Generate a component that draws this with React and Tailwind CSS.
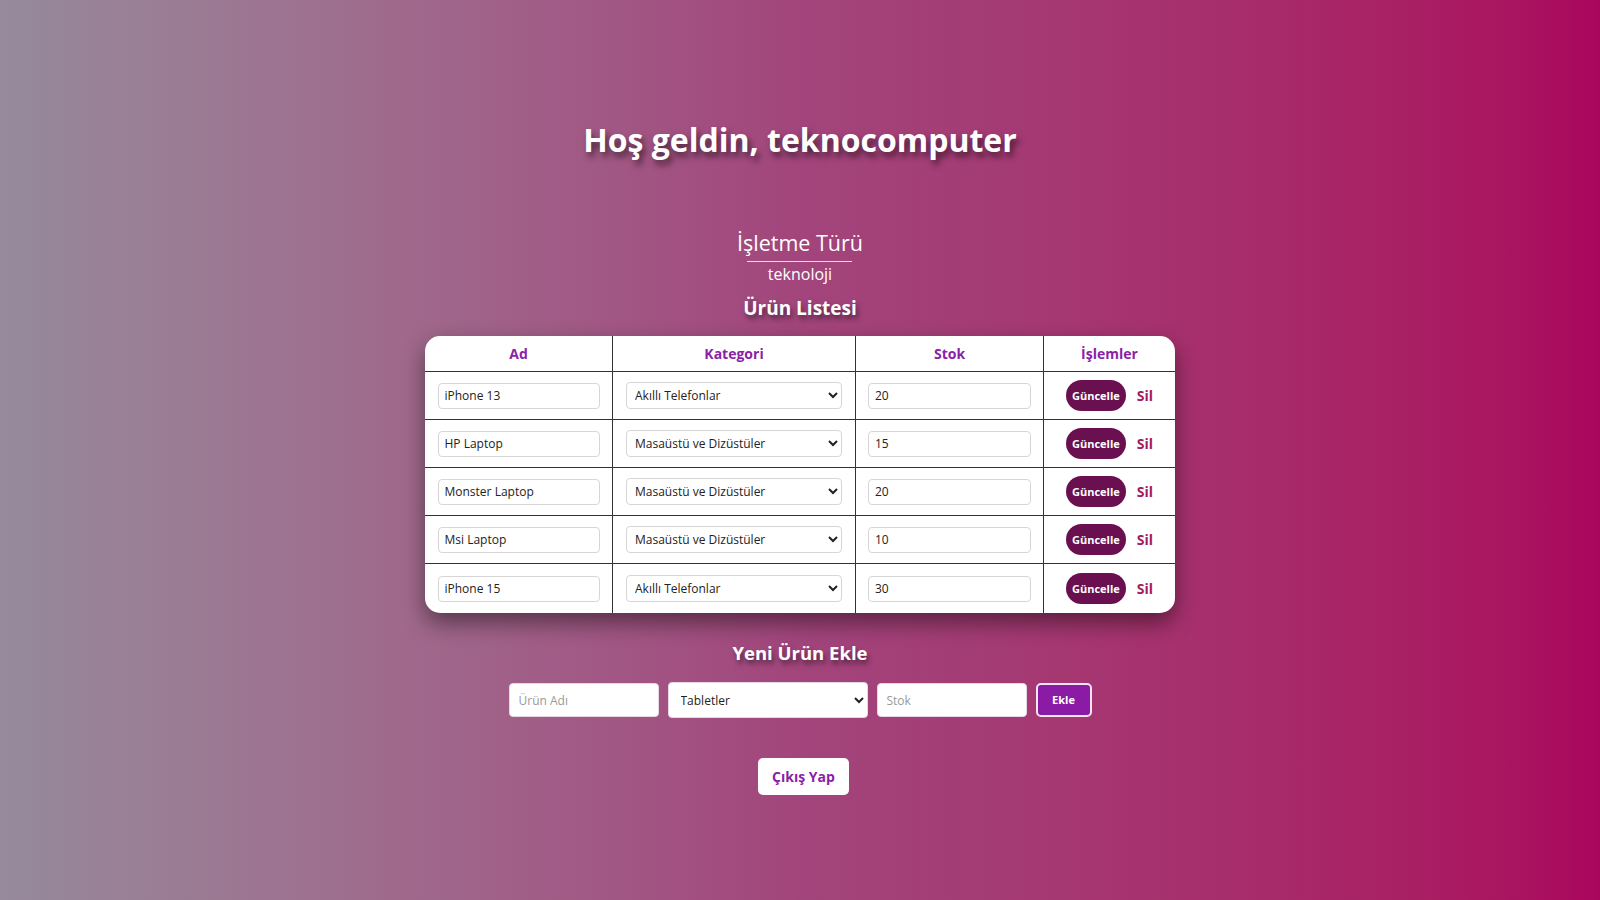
import { useState } from 'react'

const CATEGORIES = ['Akıllı Telefonlar', 'Masaüstü ve Dizüstüler', 'Tabletler', 'Aksesuarlar']

const initialProducts = [
  { id: 1, name: 'iPhone 13', category: 'Akıllı Telefonlar', stock: '20' },
  { id: 2, name: 'HP Laptop', category: 'Masaüstü ve Dizüstüler', stock: '15' },
  { id: 3, name: 'Monster Laptop', category: 'Masaüstü ve Dizüstüler', stock: '20' },
  { id: 4, name: 'Msi Laptop', category: 'Masaüstü ve Dizüstüler', stock: '10' },
  { id: 5, name: 'iPhone 15', category: 'Akıllı Telefonlar', stock: '30' },
]

export default function App() {
  const [products, setProducts] = useState(initialProducts)
  const [newName, setNewName] = useState('')
  const [newCategory, setNewCategory] = useState('Tabletler')
  const [newStock, setNewStock] = useState('')

  function updateField(id, field, value) {
    setProducts((list) => list.map((p) => (p.id === id ? { ...p, [field]: value } : p)))
  }

  function removeProduct(id) {
    setProducts((list) => list.filter((p) => p.id !== id))
  }

  function addProduct() {
    if (!newName.trim()) return
    setProducts((list) => [...list, { id: Date.now(), name: newName, category: newCategory, stock: newStock }])
    setNewName('')
    setNewStock('')
  }

  return (
    <div className="min-h-screen w-full bg-gradient-to-r from-[#968a9c] via-[#a2457c] to-[#aa055d] flex flex-col items-center font-['Open_Sans',sans-serif] text-white">
      {/* Başlık */}
      <h1 className="mt-[117px] text-[32px] leading-[46px] font-bold [text-shadow:3px_5px_6px_rgba(0,0,0,0.55)]">
        Hoş geldin, teknocomputer
      </h1>

      {/* İşletme türü */}
      <div className="mt-[65px] flex flex-col items-center">
        <p className="text-[21.5px] leading-[30px] font-normal">İşletme Türü</p>
        <div className="w-[105px] h-px bg-white/80 mt-[3px]" />
        <p className="text-[16px] leading-[22px] mt-[1px]">teknoloji</p>
      </div>

      <h2 className="mt-[10px] text-[19px] leading-[26px] font-bold [text-shadow:2px_4px_5px_rgba(0,0,0,0.5)]">Ürün Listesi</h2>

      {/* Ürün tablosu */}
      <div className="mt-[15px] w-[750px] bg-white rounded-[15px] overflow-hidden shadow-[0_10px_22px_rgba(0,0,0,0.45)] text-[#222]">
        <div className="grid grid-cols-[188px_243px_188px_131px] h-[36px] border-b border-[#333] text-[14px] font-bold text-[#8a22a8]">
          <div className="flex items-center justify-center border-r border-[#333]">Ad</div>
          <div className="flex items-center justify-center border-r border-[#333]">Kategori</div>
          <div className="flex items-center justify-center border-r border-[#333]">Stok</div>
          <div className="flex items-center justify-center">İşlemler</div>
        </div>
        {products.map((p, i) => (
          <div
            key={p.id}
            className={`grid grid-cols-[188px_243px_188px_131px] ${i < products.length - 1 ? 'h-[48px] border-b border-[#333]' : 'h-[49px]'}`}
          >
            <div className="flex items-center justify-center border-r border-[#333]">
              <input
                value={p.name}
                onChange={(e) => updateField(p.id, 'name', e.target.value)}
                className="w-[162px] h-[26px] border border-[#d6d6d6] rounded-[4px] px-[6px] text-[12px] text-[#222] outline-none"
              />
            </div>
            <div className="flex items-center justify-center border-r border-[#333]">
              <select
                value={p.category}
                onChange={(e) => updateField(p.id, 'category', e.target.value)}
                className="w-[216px] h-[27px] border border-[#d6d6d6] rounded-[4px] px-[4px] text-[12px] text-[#222] bg-white outline-none"
              >
                {CATEGORIES.map((c) => (
                  <option key={c} value={c}>{c}</option>
                ))}
              </select>
            </div>
            <div className="flex items-center justify-center border-r border-[#333]">
              <input
                value={p.stock}
                onChange={(e) => updateField(p.id, 'stock', e.target.value)}
                className="w-[163px] h-[26px] border border-[#d6d6d6] rounded-[4px] px-[6px] text-[12px] text-[#222] outline-none"
              />
            </div>
            <div className="flex items-center justify-center gap-[11px]">
              <button className="w-[60px] h-[31px] rounded-full bg-[#6a0f4f] text-white text-[11px] leading-[31px] font-bold">
                Güncelle
              </button>
              <button onClick={() => removeProduct(p.id)} className="text-[14px] font-bold text-[#a61b60]">
                Sil
              </button>
            </div>
          </div>
        ))}
      </div>

      {/* Yeni ürün */}
      <h2 className="mt-[27px] text-[18.5px] leading-[26px] font-bold [text-shadow:2px_4px_5px_rgba(0,0,0,0.5)]">Yeni Ürün Ekle</h2>

      <div className="mt-[16px] flex items-center gap-[9px] text-[12px]">
        <input
          value={newName}
          onChange={(e) => setNewName(e.target.value)}
          placeholder="Ürün Adı"
          className="w-[150px] h-[34px] bg-white rounded-[4px] border border-[#e6d6e6] px-[9px] text-[#222] placeholder-[#999] outline-none"
        />
        <select
          value={newCategory}
          onChange={(e) => setNewCategory(e.target.value)}
          className="w-[200px] h-[36px] bg-white rounded-[4px] border border-[#e6d6e6] px-[8px] text-[#222] outline-none"
        >
          {CATEGORIES.map((c) => (
            <option key={c} value={c}>{c}</option>
          ))}
        </select>
        <input
          value={newStock}
          onChange={(e) => setNewStock(e.target.value)}
          placeholder="Stok"
          className="w-[150px] h-[34px] bg-white rounded-[4px] border border-[#e6d6e6] px-[9px] text-[#222] placeholder-[#999] outline-none"
        />
        <button
          onClick={addProduct}
          className="w-[56px] h-[34px] rounded-[5px] border-2 border-[#f3e6f3] bg-[#8b1aa5] text-white text-[11px] font-bold"
        >
          Ekle
        </button>
      </div>

      <button className="mt-[40px] ml-[7px] w-[91px] h-[37px] rounded-[5px] bg-white text-[#8a22a8] text-[14px] font-bold">
        Çıkış Yap
      </button>
    </div>
  )
}
